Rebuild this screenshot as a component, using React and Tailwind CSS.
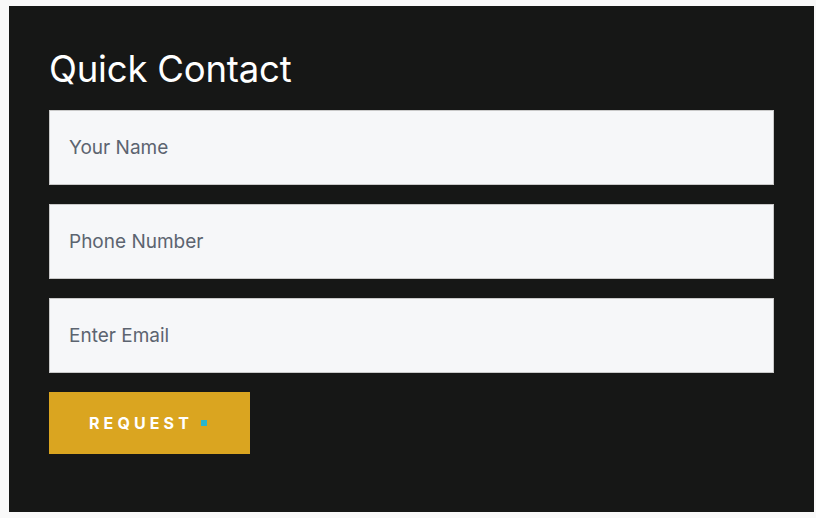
import React from "react";

const fields = ["Your Name", "Phone Number", "Enter Email"];

export default function App(){
  return (
    <div className="w-[816px] h-[518px] bg-[#f9f9f9] pl-[9px] pt-[6px] pr-[2px]" style={{fontFamily: "Inter, 'Liberation Sans', sans-serif"}}>
      <div className="w-[805px] h-[506px] bg-[#161716] px-[40px] pt-[43px]">
        <h2 className="text-white text-[36.5px] leading-[40px] font-normal tracking-[-0.2px] mb-[21px]">Quick Contact</h2>
        <form className="flex flex-col gap-[19px]" onSubmit={(e)=>e.preventDefault()}>
          {fields.map((f)=>(
            <input key={f} placeholder={f} className="w-[725px] h-[75px] bg-[#f6f7f9] border border-[#c9c9c9] px-[19px] text-[19px] text-[#5c6470] placeholder:text-[#5c6470] outline-none" />
          ))}
          <button type="submit" className="w-[201px] h-[62px] bg-[#daa520] flex items-center pl-[40px] gap-[8px]">
            <span className="text-white text-[16px] font-bold tracking-[4.1px]">REQUEST</span>
            <span className="w-[6px] h-[6px] bg-[#2bb6cc] mb-[1px]"></span>
          </button>
        </form>
      </div>
    </div>
  );
}
